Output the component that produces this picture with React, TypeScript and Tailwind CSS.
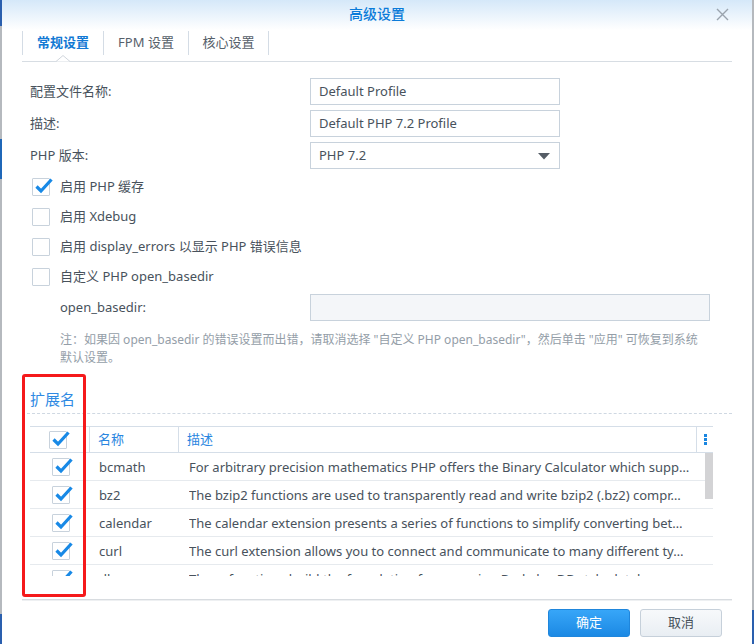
type Ext = { name: string; desc: string };

const extensions: Ext[] = [
  {
    name: "bcmath",
    desc: "For arbitrary precision mathematics PHP offers the Binary Calculator which supp…",
  },
  {
    name: "bz2",
    desc: "The bzip2 functions are used to transparently read and write bzip2 (.bz2) compr…",
  },
  {
    name: "calendar",
    desc: "The calendar extension presents a series of functions to simplify converting bet…",
  },
  {
    name: "curl",
    desc: "The curl extension allows you to connect and communicate to many different ty…",
  },
  {
    name: "dba",
    desc: "These functions build the foundation for accessing Berkeley DB style databases.",
  },
];

const font = "font-['Noto_Sans','Noto_Sans_CJK_SC',sans-serif]";

function CheckBox({ checked }: { checked: boolean }) {
  return (
    <span className="relative block w-[18px] h-[18px] shrink-0 border border-[#c8d2dc] bg-white rounded-[1px]">
      {checked && (
        <svg
          className="absolute left-[1px] -top-[2px]"
          width="19"
          height="18"
          viewBox="0 0 19 18"
        >
          <path
            d="M2.5 9.5 L7 14 L17.5 2.5"
            stroke="#1889e6"
            strokeWidth="3.2"
            fill="none"
            strokeLinejoin="miter"
          />
        </svg>
      )}
    </span>
  );
}

function Row({ label, children }: { label: string; children: React.ReactNode }) {
  return (
    <div className="flex items-center h-[27px]">
      <div className="w-[280px] text-[#48525c] pt-[1px]">{label}</div>
      {children}
    </div>
  );
}

export default function App() {
  const options = [
    { label: "启用 PHP 缓存", checked: true },
    { label: "启用 Xdebug", checked: false },
    { label: "启用 display_errors 以显示 PHP 错误信息", checked: false },
    { label: "自定义 PHP open_basedir", checked: false },
  ];

  return (
    <div className={`w-[754px] h-[644px] flex bg-[#a9b0b8] overflow-hidden ${font} text-[13px]`}>
      <div className="w-[2px] flex flex-col">
        <div className="h-[26px] bg-[#2a5fae]" />
        <div className="h-[113px] bg-[#b5b9be]" />
        <div className="h-[40px] bg-[#1f67b8]" />
        <div className="flex-1 bg-[#b5b9be]" />
        <div className="h-[30px] bg-[#2a5fae]" />
      </div>

      <div className="relative w-[750px] bg-white flex flex-col">
        {/* title bar */}
        <div className="h-[30px] pb-[4px] bg-gradient-to-b from-[#d5e8f9] to-white flex items-center justify-center relative">
          <span className="text-[14px] text-[#0b7bd9] font-medium">高级设置</span>
          <svg
            className="absolute right-[23px] top-[8px]"
            width="13"
            height="13"
            viewBox="0 0 13 13"
          >
            <path d="M1 1 L12 12 M12 1 L1 12" stroke="#9aa3ad" strokeWidth="1.4" />
          </svg>
        </div>

        <div className="px-[20px] flex-1 flex flex-col">
          {/* tabs */}
          <div className="relative h-[32px] border-b border-[#d7dde3]">
            <div className="flex mt-px h-[24px]">
              {["常规设置", "FPM 设置", "核心设置"].map((t, i) => (
                <div
                  key={t}
                  className={`flex items-center justify-center border-l border-[#d4dce5] ${
                    i === 2 ? "border-r" : ""
                  } ${i === 1 ? "w-[85px]" : "w-[81px]"} ${
                    i === 0 ? "text-[#1279d4] font-semibold" : "text-[#56606a]"
                  }`}
                >
                  {t}
                </div>
              ))}
            </div>
            <svg
              className="absolute left-[34px] bottom-[-1px]"
              width="14"
              height="7"
              viewBox="0 0 14 7"
            >
              <path d="M0 6.5 L7 0.5 L14 6.5" fill="white" stroke="#d0d6dc" />
            </svg>
          </div>

          {/* form */}
          <div className="pl-[8px] pt-[16px] flex flex-col">
            <div className="flex flex-col gap-[5px]">
              <Row label="配置文件名称:">
                <div className="w-[250px] h-[27px] border border-[#c8d2dc] px-[8px] pt-[1px] flex items-center text-[#48525c]">
                  Default Profile
                </div>
              </Row>
              <Row label="描述:">
                <div className="w-[250px] h-[27px] border border-[#c8d2dc] px-[8px] pt-[1px] flex items-center text-[#48525c]">
                  Default PHP 7.2 Profile
                </div>
              </Row>
              <Row label="PHP 版本:">
                <div className="w-[250px] h-[27px] border border-[#c8d2dc] px-[8px] pt-[1px] flex items-center justify-between text-[#48525c]">
                  <span>PHP 7.2</span>
                  <svg width="12" height="7" viewBox="0 0 12 7" className="mr-[1px]">
                    <path d="M0 0 H12 L6 6.5 Z" fill="#555d66" />
                  </svg>
                </div>
              </Row>
            </div>

            <div className="mt-[3px] flex flex-col">
              {options.map((o) => (
                <div key={o.label} className="h-[30px] flex items-center pl-[2px] gap-[10px] text-[#48525c]">
                  <CheckBox checked={o.checked} />
                  <span>{o.label}</span>
                </div>
              ))}
            </div>

            <div className="mt-[2px] flex items-center h-[27px]">
              <div className="w-[280px] pl-[30px] text-[#48525c]">open_basedir:</div>
              <div className="w-[400px] h-[27px] border border-[#c8d2dc] bg-[#f4f6f9]" />
            </div>

            <p className="mt-[10px] pl-[30px] text-[12px] leading-[18px] text-[#949ea8]">
              注：如果因 open_basedir 的错误设置而出错，请取消选择 "自定义 PHP open_basedir"，然后单击 "应用" 可恢复到系统
              <br />
              默认设置。
            </p>
          </div>

          {/* extensions */}
          <div className="mt-[22px] pl-[8px] h-[21px] text-[15px] leading-[21px] text-[#2f8ae3]">扩展名</div>
          <div className="mt-[3px] border-t border-dashed border-[#cfd8e2]" />

          <div className="mt-[12px] ml-[8px] w-[683px]">
            <div className="flex h-[27px] border-y border-[#d5dee8] text-[#2a86e0]">
              <div className="w-[60px] flex items-center justify-center border-r border-[#d5dee8] pr-[3px]">
                <CheckBox checked />
              </div>
              <div className="w-[89px] pl-[8px] pt-[1px] flex items-center border-r border-[#d5dee8]">名称</div>
              <div className="flex-1 pl-[8px] pt-[1px] flex items-center border-r border-[#d5dee8]">描述</div>
              <div className="w-[16px] flex items-center justify-center">
                <svg width="3" height="11" viewBox="0 0 3 11">
                  <rect x="0" y="0" width="3" height="3" fill="#1a86e0" />
                  <rect x="0" y="4" width="3" height="3" fill="#1a86e0" />
                  <rect x="0" y="8" width="3" height="3" fill="#1a86e0" />
                </svg>
              </div>
            </div>

            <div className="relative h-[123px] overflow-hidden">
              {extensions.map((e) => (
                <div key={e.name} className="flex h-[28px] border-b border-[#e6eaee] text-[#48525c]">
                  <div className="w-[60px] flex items-center justify-center pl-[1px]">
                    <CheckBox checked />
                  </div>
                  <div className="w-[89px] pl-[9px] pt-[3px] flex items-center">{e.name}</div>
                  <div className="w-[518px] pl-[10px] pr-[2px] pt-[3px] flex items-center">
                    <span className="truncate">{e.desc}</span>
                  </div>
                </div>
              ))}
              <div className="absolute right-0 top-0 w-[8px] h-[46px] bg-[#d3d3d5]" />
            </div>
          </div>

          <div className="mt-[23px] h-[2px] bg-[#d8dce0] border-b border-[#eef0f2]" />

          <div className="mt-[8px] flex justify-end gap-[10px] pr-[10px]">
            <button className="w-[82px] h-[28px] rounded-[3px] border border-[#1f86dc] bg-gradient-to-b from-[#37a6f8] to-[#1b89e4] text-white text-[13px]">
              确定
            </button>
            <button className="w-[82px] h-[28px] rounded-[3px] border border-[#c6d0da] bg-gradient-to-b from-[#f7f9fb] to-[#e9eef3] text-[#48525c] text-[13px]">
              取消
            </button>
          </div>
        </div>

        {/* annotation box */}
        <div className="absolute left-[20px] top-[374px] w-[64px] h-[223px] border-[3px] border-[#f5191b] rounded-[3px]" />
      </div>

      <div className="w-[2px] flex flex-col bg-[#b5b9be]">
        <div className="flex-1" />
        <div className="h-[34px] bg-[#2a5fae]" />
      </div>
    </div>
  );
}
